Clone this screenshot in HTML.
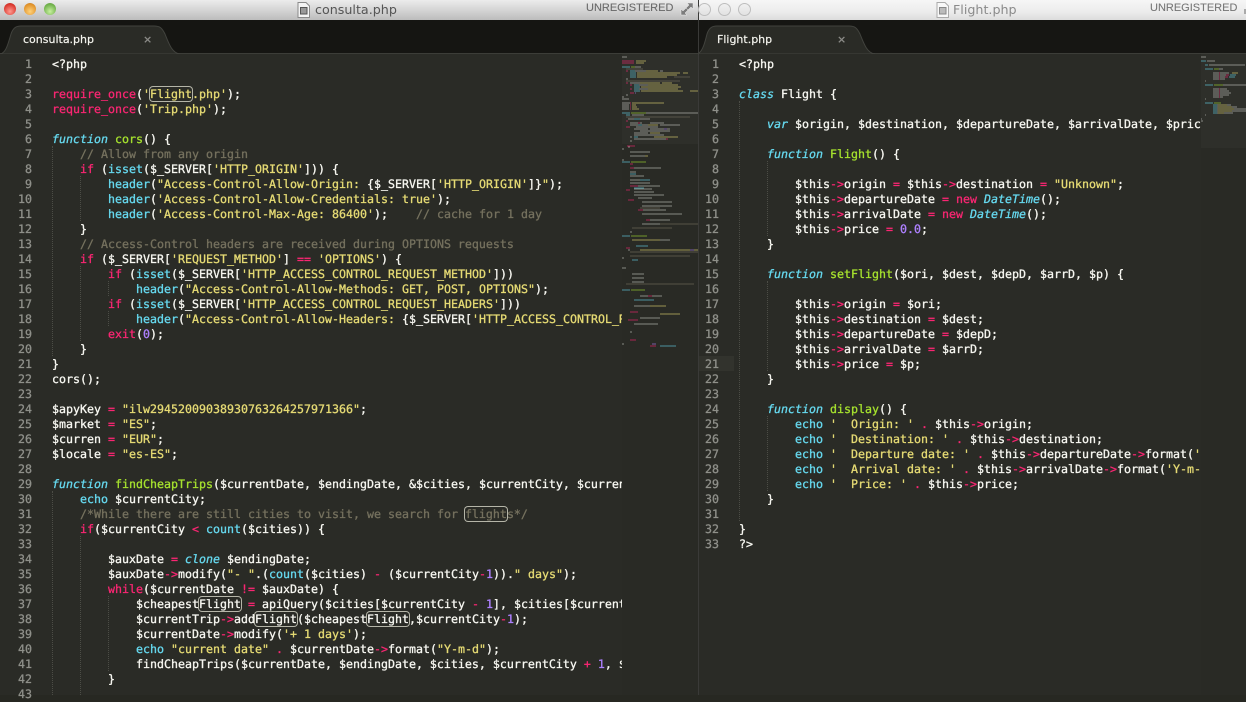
<!DOCTYPE html>
<html><head><meta charset="utf-8">
<style>
html,body{margin:0;padding:0;background:#272822;}
body{width:1246px;height:695px;overflow:hidden;position:relative;}
.abs{position:absolute;}
pre{margin:0;font:11.63px/15px "DejaVu Sans Mono","Liberation Mono",monospace;color:#f8f8f2;-webkit-text-stroke:.3px;text-rendering:geometricPrecision;}
.code{position:absolute;top:57px;height:638px;overflow:hidden;}
.gut{position:absolute;top:57px;color:#8f908a;text-align:right;width:40px;}
i{font-style:normal}
.p{color:#f92672}.s{color:#e6db74}.b{color:#66d9ef}.f{color:#66d9ef;font-style:italic}.g{color:#a6e22e}.c{color:#75715e}.n{color:#ae81ff}
.h{border-radius:3px;box-shadow:0 0 0 1px #b5b5a8;}
.title{font:12.7px/20px "DejaVu Sans",sans-serif;color:#555;white-space:pre;}
.unreg{font:11px/17px "Liberation Sans",sans-serif;color:#6a6a6a;white-space:pre;-webkit-text-stroke:.1px;}
.tab{font:11px/15px "DejaVu Sans",sans-serif;color:#f4f4ee;white-space:pre;-webkit-text-stroke:.2px;}
.x{font:bold 11px/13px "DejaVu Sans",sans-serif;color:#8a8a86;}
.dot{position:absolute;width:0;border-left:1px dotted #4c4d46;}
.light{position:absolute;width:12px;height:12px;border-radius:50%;top:3px;}
.grey{position:absolute;width:11px;height:11px;border-radius:50%;top:3px;border:1px solid #bdbdbd;background:linear-gradient(#f0f0f0,#e2e2e2);box-sizing:content-box;}
</style></head><body>
<!-- title bars -->
<div class="abs" style="left:0;top:0;width:698px;height:20px;background:linear-gradient(#ececec,#d0d0d0 60%,#bcbcbc);"></div>
<div class="abs" style="left:699px;top:0;width:547px;height:20px;background:linear-gradient(#f6f6f6,#ececec 60%,#dcdcdc);"></div>
<div class="abs" style="left:698px;top:0;width:1px;height:695px;background:#3a3a38;"></div>
<div class="light" style="left:4px;background:radial-gradient(circle at 50% 70%,#ff9a90,#d9352c 70%,#a83a34);"></div>
<div class="light" style="left:24px;background:radial-gradient(circle at 50% 70%,#ffd27a,#e0922a 70%,#b0783a);"></div>
<div class="light" style="left:44px;background:radial-gradient(circle at 50% 70%,#c8f0a0,#6fb04a 70%,#6a9a54);"></div>
<div class="grey" style="left:698px"></div><div class="grey" style="left:718px"></div><div class="grey" style="left:738px"></div>
<svg class="abs" style="left:296px;top:1px" width="16" height="18"><path d="M2 1.5h8l3.500 3.500v11.500h-11.500z" fill="#f4f4f4" stroke="#8a8a8a"/><rect x="4.500" y="6.500" width="6.500" height="6.500" fill="#999" stroke="#555"/></svg>
<div class="abs title" style="left:315px;top:0">consulta.php</div>
<div class="abs unreg" style="left:586px;top:0">UNREGISTERED</div>
<svg class="abs" style="left:679px;top:1px" width="16" height="16"><path d="M8 2h6v6l-2-2-3 3-2-2 3-3zM2 8v6h6l-2-2 3-3-2-2-3 3z" fill="#7d7d7d" stroke="#eee" stroke-width=".5"/></svg>
<svg class="abs" style="left:935px;top:1px" width="16" height="18"><path d="M2 1.500h8l3.500 3.500v11.500h-11.500z" fill="#f8f8f8" stroke="#aaa"/><rect x="4.500" y="6.500" width="6.500" height="6.500" fill="#bbb" stroke="#888"/></svg>
<div class="abs title" style="left:953px;top:0;color:#8a8a8a">Flight.php</div>
<div class="abs unreg" style="left:1150px;top:0;color:#777">UNREGISTERED</div>
<svg class="abs" style="left:1243px;top:6px" width="3" height="10"><rect x="1" y="3" width="2" height="5" fill="#aaa"/></svg>

<!-- tab bars -->
<div class="abs" style="left:0;top:20px;width:698px;height:33px;background:#151512;"></div>
<div class="abs" style="left:699px;top:20px;width:547px;height:33px;background:#161613;"></div>
<div class="abs" style="left:0;top:53px;width:1246px;height:1px;background:#3c3d38;"></div>
<div class="abs" style="left:0;top:54px;width:698px;height:641px;background:#2a2b26;"></div>
<div class="abs" style="left:699px;top:54px;width:547px;height:641px;background:#2a2b26;"></div>
<svg class="abs" style="left:0;top:20px" width="1246" height="36">
<path d="M0 34C6 33 8 24 11 14C13 8 16 6 21 6H154C160 6 162 8 165 14C169 24 172 33 180 34Z" fill="#2a2b26" stroke="#42433e" stroke-width="1"/>
<path d="M0 34H180V36H0Z" fill="#2a2b26"/>
<path d="M699 33C703 30 705 22 707 14C709 8 712 6 717 6H849C855 6 857 8 860 14C864 24 867 33 875 34H699Z" fill="#2a2b26" stroke="#42433e" stroke-width="1"/>
<path d="M699 34H875V36H699Z" fill="#2a2b26"/>
</svg>
<div class="abs tab" style="left:23px;top:32px">consulta.php</div>
<div class="abs x" style="left:143px;top:33px">×</div>
<div class="abs tab" style="left:717px;top:32px">Flight.php</div>
<div class="abs x" style="left:837px;top:33px">×</div>

<!-- current line gutter -->
<div class="abs" style="left:699px;top:356px;width:35px;height:15px;background:#32332d;"></div>

<!-- indent guides left -->
<div class="dot" style="left:52px;top:146px;height:210px"></div>
<div class="dot" style="left:80px;top:176px;height:45px"></div>
<div class="dot" style="left:80px;top:266px;height:75px"></div>
<div class="dot" style="left:108px;top:281px;height:15px"></div>
<div class="dot" style="left:108px;top:311px;height:15px"></div>
<div class="dot" style="left:52px;top:491px;height:204px"></div>
<div class="dot" style="left:80px;top:536px;height:159px"></div>
<div class="dot" style="left:108px;top:596px;height:75px"></div>
<!-- indent guides right -->
<div class="dot" style="left:739px;top:101px;height:420px"></div>
<div class="dot" style="left:767px;top:161px;height:75px"></div>
<div class="dot" style="left:767px;top:281px;height:90px"></div>
<div class="dot" style="left:767px;top:416px;height:75px"></div>

<!-- gutters -->
<pre class="gut" style="left:-8px">1
2
3
4
5
6
7
8
9
10
11
12
13
14
15
16
17
18
19
20
21
22
23
24
25
26
27
28
29
30
31
32
33
34
35
36
37
38
39
40
41
42
43</pre>
<pre class="gut" style="left:679px">1
2
3
4
5
6
7
8
9
10
11
12
13
14
15
16
17
18
19
20
21
22
23
24
25
26
27
28
29
30
31
32
33</pre>

<!-- left code -->
<pre class="code" style="left:52px;width:570px">&lt;?php

<i class="p">require_once</i>(<i class="s">'<i class="h">Flight</i>.php'</i>);
<i class="p">require_once</i>(<i class="s">'Trip.php'</i>);

<i class="f">function</i> <i class="g">cors</i>() {
    <i class="c">// Allow from any origin</i>
    <i class="p">if</i> (<i class="b">isset</i>($_SERVER[<i class="s">'HTTP_ORIGIN'</i>])) {
        <i class="b">header</i>(<i class="s">"Access-Control-Allow-Origin: </i>{$_SERVER[<i class="s">'HTTP_ORIGIN'</i>]}<i class="s">"</i>);
        <i class="b">header</i>(<i class="s">'Access-Control-Allow-Credentials: true'</i>);
        <i class="b">header</i>(<i class="s">'Access-Control-Max-Age: 86400'</i>);    <i class="c">// cache for 1 day</i>
    }
    <i class="c">// Access-Control headers are received during OPTIONS requests</i>
    <i class="p">if</i> ($_SERVER[<i class="s">'REQUEST_METHOD'</i>] <i class="p">==</i> <i class="s">'OPTIONS'</i>) {
        <i class="p">if</i> (<i class="b">isset</i>($_SERVER[<i class="s">'HTTP_ACCESS_CONTROL_REQUEST_METHOD'</i>]))
            <i class="b">header</i>(<i class="s">"Access-Control-Allow-Methods: GET, POST, OPTIONS"</i>);
        <i class="p">if</i> (<i class="b">isset</i>($_SERVER[<i class="s">'HTTP_ACCESS_CONTROL_REQUEST_HEADERS'</i>]))
            <i class="b">header</i>(<i class="s">"Access-Control-Allow-Headers: </i>{$_SERVER[<i class="s">'HTTP_ACCESS_CONTROL_REQUEST_HEADERS'</i>]}<i class="s">"</i>);
        <i class="p">exit</i>(<i class="n">0</i>);
    }
}
cors();

$apyKey <i class="p">=</i> <i class="s">"ilw29452009038930763264257971366"</i>;
$market <i class="p">=</i> <i class="s">"ES"</i>;
$curren <i class="p">=</i> <i class="s">"EUR"</i>;
$locale <i class="p">=</i> <i class="s">"es-ES"</i>;

<i class="f">function</i> <i class="g">findCheapTrips</i>($currentDate, $endingDate, &amp;$cities, $currentCity, $currentTrip) {
    <i class="b">echo</i> $currentCity;
    <i class="c">/*While there are still cities to visit, we search for <i class="h">flight</i>s*/</i>
    <i class="p">if</i>($currentCity <i class="p">&lt;</i> <i class="b">count</i>($cities)) {

        $auxDate <i class="p">=</i> <i class="f">clone</i> $endingDate;
        $auxDate<i class="p">-&gt;</i>modify(<i class="s">"- "</i>.(<i class="b">count</i>($cities) <i class="p">-</i> ($currentCity<i class="p">-</i><i class="n">1</i>)).<i class="s">" days"</i>);
        <i class="p">while</i>($currentDate <i class="p">!=</i> $auxDate) {
            $cheapest<i class="h">Flight</i> <i class="p">=</i> apiQuery($cities[$currentCity <i class="p">-</i> <i class="n">1</i>], $cities[$currentCity]);
            $currentTrip<i class="p">-&gt;</i>add<i class="h">Flight</i>($cheapest<i class="h">Flight</i>,$currentCity<i class="p">-</i><i class="n">1</i>);
            $currentDate<i class="p">-&gt;</i>modify(<i class="s">'+ 1 days'</i>);
            <i class="b">echo</i> <i class="s">"current date"</i> <i class="p">.</i> $currentDate<i class="p">-&gt;</i>format(<i class="s">"Y-m-d"</i>);
            findCheapTrips($currentDate, $endingDate, $cities, $currentCity <i class="p">+</i> <i class="n">1</i>, $currentTrip);
        }
</pre>

<!-- right code -->
<pre class="code" style="left:739px;width:462px">&lt;?php

<i class="f">class</i> Flight {

    <i class="f">var</i> $origin, $destination, $departureDate, $arrivalDate, $price;

    <i class="f">function</i> <i class="g">Flight</i>() {

        $this<i class="p">-&gt;</i>origin <i class="p">=</i> $this<i class="p">-&gt;</i>destination <i class="p">=</i> <i class="s">"Unknown"</i>;
        $this<i class="p">-&gt;</i>departureDate <i class="p">=</i> <i class="p">new</i> <i class="f">DateTime</i>();
        $this<i class="p">-&gt;</i>arrivalDate <i class="p">=</i> <i class="p">new</i> <i class="f">DateTime</i>();
        $this<i class="p">-&gt;</i>price <i class="p">=</i> <i class="n">0.0</i>;
    }

    <i class="f">function</i> <i class="g">setFlight</i>($ori, $dest, $depD, $arrD, $p) {

        $this<i class="p">-&gt;</i>origin <i class="p">=</i> $ori;
        $this<i class="p">-&gt;</i>destination <i class="p">=</i> $dest;
        $this<i class="p">-&gt;</i>departureDate <i class="p">=</i> $depD;
        $this<i class="p">-&gt;</i>arrivalDate <i class="p">=</i> $arrD;
        $this<i class="p">-&gt;</i>price <i class="p">=</i> $p;
    }

    <i class="f">function</i> <i class="g">display</i>() {
        <i class="b">echo</i> <i class="s">'  Origin: '</i> <i class="p">.</i> $this<i class="p">-&gt;</i>origin;
        <i class="b">echo</i> <i class="s">'  Destination: '</i> <i class="p">.</i> $this<i class="p">-&gt;</i>destination;
        <i class="b">echo</i> <i class="s">'  Departure date: '</i> <i class="p">.</i> $this<i class="p">-&gt;</i>departureDate<i class="p">-&gt;</i>format(<i class="s">'Y-m-d'</i>);
        <i class="b">echo</i> <i class="s">'  Arrival date: '</i> <i class="p">.</i> $this<i class="p">-&gt;</i>arrivalDate<i class="p">-&gt;</i>format(<i class="s">'Y-m-d'</i>);
        <i class="b">echo</i> <i class="s">'  Price: '</i> <i class="p">.</i> $this<i class="p">-&gt;</i>price;
    }

}
?&gt;</pre>

<!-- minimaps -->
<svg class="abs" style="left:622px;top:54px" width="76" height="641" viewBox="622 54 76 641">
<rect x="622" y="54" width="76" height="641" fill="#292a25"/>
<rect x="622" y="54" width="76" height="90" fill="#2e2f2a"/>
<g fill="none" stroke-width="1" opacity=".6">
<path stroke="#c8c8c2" d="M622 57h5M631 67h10M630 71h16M660 71h3M626 79h2M630 83h10M634 85h14M634 89h14M626 95h2M622 97h2M622 99h7M622 103h8M622 105h7M622 107h7M622 109h7M646 113h52M632 115h12M628 119h8M638 119h12M630 123h8M640 123h2M650 123h14M630 125h10M642 125h7M660 125h20M636 127h22M634 129h14M650 129h20M640 131h30M634 133h14M634 135h24M630 137h2M648 135h16M634 139h34M630 141h2M628 147h2M622 149h2M630 152h20M630 156h18M622 160h2M631 168h30M630 172h6M630 176h14M630 180h18M630 183h20M634 186h26M634 189h18M634 192h20M634 195h30M638 198h14M642 202h30M642 206h30M642 210h24M642 214h40M646 220h24M642 224h34M630 232h2M634 240h36M628 250h2M622 258h2M622 268h4M632 274h12M632 278h12M632 282h12M640 296h22M634 306h18M640 318h20M634 324h24M630 332h2M622 344h2"/>
<path stroke="#f92672" d="M622 61h12M622 63h12M626 71h2M630 85h2M626 83h2M630 89h2M630 93h4M630 103h1M630 105h1M630 107h1M630 109h1M626 121h2M638 123h2M626 127h4M666 139h2M627 146h8M630 164h3M630 168h4M630 186h8M626 190h4M628 200h6M638 210h5M646 220h4M626 248h4M648 296h4M630 312h8M628 320h10M630 340h6M650 346h6"/>
<path stroke="#e6db74" d="M636 61h10M636 63h8M646 71h12M637 73h43M683 73h5M637 75h40M637 77h30M640 83h20M662 83h10M648 85h30M641 87h40M648 89h30M641 91h42M690 91h8M632 103h32M632 105h4M632 107h5M632 109h7M648 125h10M650 133h10M654 137h24M645 156h3M632 240h28M640 250h58M650 306h16M660 314h20"/>
<path stroke="#66d9ef" d="M622 67h8M630 71h5M630 73h6M630 75h6M630 77h6M634 85h5M634 87h6M634 89h5M634 91h6M622 113h8M626 115h4M634 119h6M638 125h4M634 137h4M622 162h8M630 174h6M640 180h10M634 188h10M622 236h8M636 246h12M632 260h6M622 290h8M634 300h20M660 346h16"/>
<path stroke="#a6e22e" d="M631 113h15M631 67h4M631 162h15M631 236h16M631 290h14"/>
<path stroke="#75715e" d="M626 69h17M674 77h16M626 81h54M626 117h64M660 224h38M640 208h20M626 284h68M630 252h68M630 256h60M632 228h40"/>
<path stroke="#ae81ff" d="M635 93h1M664 129h3M690 250h4M652 344h4"/>
</g>
</svg>
<svg class="abs" style="left:1201px;top:54px" width="45" height="641" viewBox="1201 54 45 641">
<rect x="1201" y="54" width="45" height="641" fill="#292a25"/>
<rect x="1201" y="54" width="45" height="94" fill="#2e2f2a"/>
<g fill="none" stroke-width="1" opacity=".6">
<path stroke="#c8c8c2" d="M1201 57h5M1207 61h8M1209 65h36M1218 69h5M1213 73h16M1213 75h14M1213 77h12M1213 79h12M1205 81h1M1219 85h28M1213 89h14M1213 91h16M1213 93h18M1213 95h16M1213 97h10M1205 99h1M1215 103h5M1213 105h18M1213 107h24M1213 109h34M1213 111h34M1213 113h20M1205 115h1M1201 119h1M1201 121h2"/>
<path stroke="#f92672" d="M1219 73h1M1219 75h1M1219 77h1M1219 79h1M1226 75h3M1225 77h3M1219 89h1M1219 91h1M1219 93h1M1219 95h1M1219 97h1"/>
<path stroke="#e6db74" d="M1232 73h6M1218 105h9M1218 107h14M1218 109h16M1218 111h14M1218 113h6"/>
<path stroke="#66d9ef" d="M1201 61h5M1205 65h3M1205 69h8M1205 85h8M1205 103h8M1213 105h4M1213 107h4M1213 109h4M1213 111h4M1213 113h4M1230 75h6M1229 77h6"/>
<path stroke="#a6e22e" d="M1214 69h5M1214 85h9M1214 103h7"/>
</g>
</svg>
</body></html>
